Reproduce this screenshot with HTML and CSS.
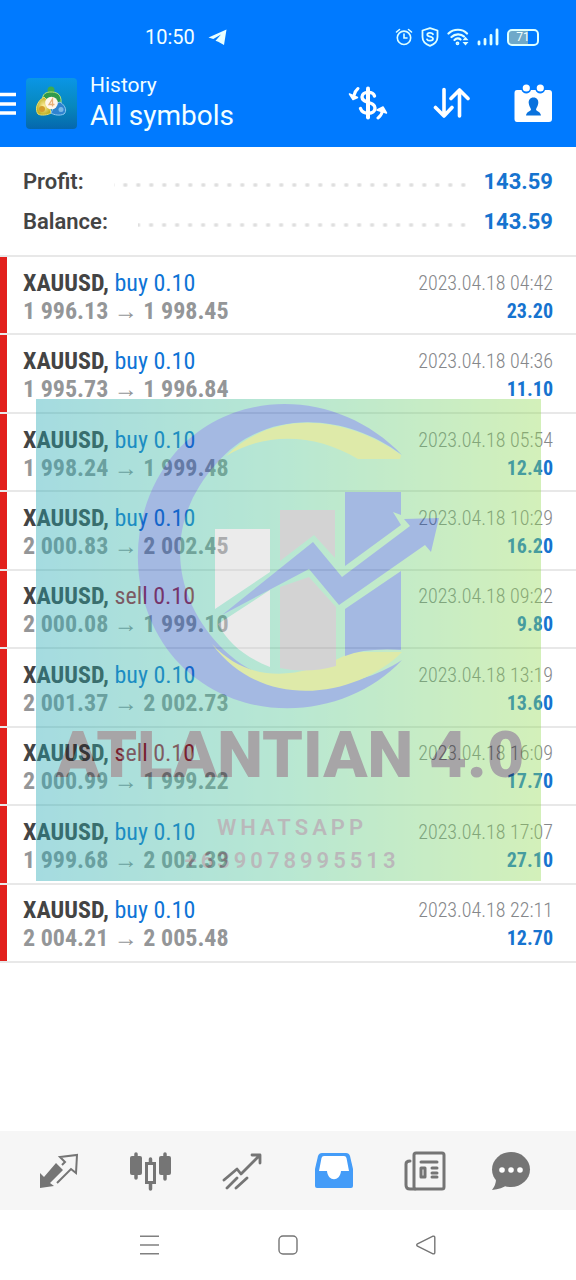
FILE: index.html
```html
<!DOCTYPE html>
<html lang="en">
<head>
<meta charset="utf-8">
<meta name="viewport" content="width=device-width, initial-scale=1">
<title>History</title>
<link rel="stylesheet" href="styles.css">
</head>
<body>
<div class="app">
  <header class="top">
    <div class="status">
      <div class="status-left">
        <time>10:50</time>
        <svg width="20" height="18" viewBox="0 0 20 18"><path fill="#e8ffff" d="M.5 9.500 18.500 1.500 16 17 10.200 13.800 7.500 12.800 13 6.500 5.300 11Z"/></svg>
      </div>
      <div class="status-right">
        <svg width="18" height="18" viewBox="0 0 18 18" fill="none" stroke="#dff" stroke-width="1.600" stroke-linecap="round"><circle cx="9" cy="9.800" r="6.700"/><path d="M9 6v4h3M1.500 4 4.500 1.500M16.500 4 13.500 1.500"/></svg>
        <svg width="18" height="20" viewBox="0 0 18 20" fill="none" stroke="#dff" stroke-width="1.800" stroke-linejoin="round" stroke-linecap="round"><path d="M9 1.200 16.500 3.500V10C16.500 14.500 13.500 17.200 9 18.900 4.500 17.200 1.500 14.500 1.500 10V3.500Z"/><path d="M12 7.300C11 5.500 6.300 5.400 6.300 7.800 6.300 10.300 12 9 12 11.800 12 14.300 7 14.200 6 12.300"/></svg>
        <svg width="22" height="18" viewBox="0 0 22 18" fill="none" stroke="#dff" stroke-width="2.200" stroke-linecap="round"><path d="M1.500 5.500C6.500.5 15.500.5 20 5.500M4.500 9C8 5.500 14 5.500 17 8.500M7.500 12C9.500 10 12 10 13.500 11.500"/><circle cx="10.500" cy="15.300" r=".8"/><path stroke="none" fill="#dff" d="M18.500 8.800 21.500 12.300H15.500ZM18.500 17.500 21.500 14H15.500Z"/></svg>
        <svg width="22" height="18" viewBox="0 0 22 18" stroke="#dff" stroke-width="2.800" stroke-linecap="round"><path d="M2 14v2M8 11.500V16M14 7.500V16M20 2V16"/></svg>
        <span class="battery">71</span>
      </div>
    </div>
    <div class="bar">
      <button class="menu" aria-label="Menu"><svg width="16" height="24" viewBox="0 0 16 24"><path stroke="#fff" stroke-width="3.600" d="M0 3.500H16M0 13H16M0 22H16"/></svg></button>
      <svg class="logo" viewBox="0 0 51 51">
        <defs>
          <linearGradient id="sky" x1="0" y1="0" x2="0" y2="1"><stop offset="0" stop-color="#0a96e6"/><stop offset=".55" stop-color="#0788bd"/><stop offset="1" stop-color="#0567ad"/></linearGradient>
          <radialGradient id="gold"><stop offset="0" stop-color="#fff0a0"/><stop offset="1" stop-color="#bfae22"/></radialGradient>
        </defs>
        <rect width="51" height="51" rx="4" fill="url(#sky)"/>
        <circle cx="25" cy="12" r="3.500" fill="#3eaa50"/>
        <path fill="#2f9a4c" stroke="#b6e37b" d="M17 24C15 15 21 14 25 14S36 15 35 25L29 28 20 27Z"/>
        <path fill="url(#gold)" stroke="#e8dd6a" d="M18 19C10 24 9 32 12 36 15 38 22 37 25 35L22 23Z"/>
        <path fill="#2e83d0" stroke="#8cc9ef" d="M29 26 34 24C40 28 41 33 38 36 34 38 28 37 25 35Z"/>
        <circle cx="16" cy="31" r="3" fill="#d49c2b"/><circle cx="35" cy="31.500" r="2.500" fill="#79b9e8"/>
        <circle cx="25.500" cy="25" r="6.300" fill="#fff6ea"/>
        <path fill="none" stroke="#e8b078" stroke-width="1.300" d="M26.500 28.500V21L23 26.500H28.500"/>
      </svg>
      <div class="titles"><h2>History</h2><h1>All symbols</h1></div>
      <div class="actions">
        <button aria-label="Currency"><svg width="40" height="34" viewBox="0 0 40 34" fill="none" stroke="#fff" stroke-width="3.400" stroke-linecap="round"><path d="M26.500 10C25 5 14 5 14 11 14 18 27 15 27 22 27 29 15 29 12.500 22.500"/><path stroke-width="4" d="M20 2.500V31.500"/><path stroke-width="3" d="M10 2.500C7.500 4.500 6.500 7 6 9.500"/><path fill="#fff" stroke-width="1.500" stroke-linejoin="round" d="M1.500 8 9.500 11.500 5 13.500Z"/><path stroke-width="3" d="M30 32C33 30 34 27 34.500 25"/><path fill="#fff" stroke-width="1.500" stroke-linejoin="round" d="M29 24 35 21 38.500 27Z"/></svg></button>
        <button aria-label="Sort"><svg width="38" height="32" viewBox="0 0 38 32" fill="none" stroke="#fff" stroke-width="3.600" stroke-linecap="round" stroke-linejoin="round"><path d="M12 2.500V29M3.500 20.500 12 29 20 20.500M27.500 29V3M19 11.500 27.500 3 36 11.500"/></svg></button>
        <button aria-label="Period"><svg width="38" height="38" viewBox="0 0 38 38"><path fill="#fff" d="M3 6H7.500A5 5 0 0 0 17 6H21.500A5 5 0 0 0 31 6H35Q38 6 38 9V35Q38 38 35 38H3Q.5 38 .5 35V9Q.5 6 3 6Z"/><circle cx="12.300" cy="4" r="3.600" fill="#fff"/><circle cx="26.300" cy="4" r="3.600" fill="#fff"/><path fill="#0a72dd" d="M19.500 13.500C23 13.500 24.500 16 24.300 19 24 22 22.500 23.500 22 25.500 22.500 27.500 26.500 27.500 27 31.500H12C12.500 27.500 16.500 27.500 17 25.500 16.500 23.500 15 22 14.700 19 14.500 16 16 13.500 19.500 13.500Z"/></svg></button>
      </div>
    </div>
  </header>

  <dl class="summary">
    <div><dt>Profit:</dt><dd>143.59</dd></div>
    <div><dt>Balance:</dt><dd>143.59</dd></div>
  </dl>

  <main class="history">
    <ul class="deals">
      <li><div><b>XAUUSD,</b> <span class="buy">buy 0.10</span></div><time>2023.04.18 04:42</time><div class="price">1 996.13 <i>→</i> 1 998.45</div><strong>23.20</strong></li>
      <li><div><b>XAUUSD,</b> <span class="buy">buy 0.10</span></div><time>2023.04.18 04:36</time><div class="price">1 995.73 <i>→</i> 1 996.84</div><strong>11.10</strong></li>
      <li><div><b>XAUUSD,</b> <span class="buy">buy 0.10</span></div><time>2023.04.18 05:54</time><div class="price">1 998.24 <i>→</i> 1 999.48</div><strong>12.40</strong></li>
      <li><div><b>XAUUSD,</b> <span class="buy">buy 0.10</span></div><time>2023.04.18 10:29</time><div class="price">2 000.83 <i>→</i> 2 002.45</div><strong>16.20</strong></li>
      <li><div><b>XAUUSD,</b> <span class="sell">sell 0.10</span></div><time>2023.04.18 09:22</time><div class="price">2 000.08 <i>→</i> 1 999.10</div><strong>9.80</strong></li>
      <li><div><b>XAUUSD,</b> <span class="buy">buy 0.10</span></div><time>2023.04.18 13:19</time><div class="price">2 001.37 <i>→</i> 2 002.73</div><strong>13.60</strong></li>
      <li><div><b>XAUUSD,</b> <span class="sell">sell 0.10</span></div><time>2023.04.18 16:09</time><div class="price">2 000.99 <i>→</i> 1 999.22</div><strong>17.70</strong></li>
      <li><div><b>XAUUSD,</b> <span class="buy">buy 0.10</span></div><time>2023.04.18 17:07</time><div class="price">1 999.68 <i>→</i> 2 002.39</div><strong>27.10</strong></li>
      <li><div><b>XAUUSD,</b> <span class="buy">buy 0.10</span></div><time>2023.04.18 22:11</time><div class="price">2 004.21 <i>→</i> 2 005.48</div><strong>12.70</strong></li>
    </ul>
    <div class="watermark">
      <svg viewBox="36 399 505 482">
        <path fill="#1e52b9" d="M402 455C340 390 235 385 175 453C124 514 127 603 175 659C237 728 345 721 402 660C350 694 270 699 219 645C170 592 165 520 217 463C264 408 345 412 402 455Z"/>
        <path fill="#afcd2a" d="M226 456C270 412 340 412 401 455L400 459H358C315 433 265 432 226 456ZM212 644C250 685 300 678 344 656Q352 652 362 652H402C360 695 265 715 212 644Z"/>
        <path fill="#cfcfcf" d="M215 529H270V572L215 609ZM218 624 270 590V667C245 657 228 643 218 624Z"/>
        <path fill="#949494" d="M280 510H335V558L314 535 280 561ZM280 587 309 577 336 607V666Q308 674 280 668Z"/>
        <path fill="#1e52b9" d="M345 492H401V515L393 512 401 525 345 566ZM345 609 401 571V650Q365 648 345 656Z"/>
        <path fill="#1e52b9" d="M222 615 313 542 342 577 410 526 404 519 439 518 431 552 425 545 339 605 309 569Z"/>
        <text class="wm-name" x="290" y="777">ATLANTIAN 4.0</text>
        <text class="wm-line" x="292" y="835">WHATSAPP</text>
        <text class="wm-line" x="292" y="868">+639078995513</text>
      </svg>
    </div>
  </main>

  <nav class="tabs">
    <button aria-label="Quotes"><svg width="42" height="40" viewBox="0 0 42 40"><path fill="#757575" d="M2 22 6 26 18 12 25 19 12 32 16 35 2 37Z"/><path fill="none" stroke="#757575" stroke-width="2" d="M24 14 27 11 22 6 39 4 38 22 33 18 19 32"/></svg></button>
    <button aria-label="Chart"><svg width="42" height="40" viewBox="0 0 42 40" fill="#757575"><rect x="1" y="5" width="12" height="19" rx="2"/><rect x="30" y="5" width="12" height="19" rx="2"/><path stroke="#757575" stroke-width="3.500" stroke-linecap="round" d="M7 3V27M36 3V28M21.500 8V12M21.500 33V38"/><rect x="17.500" y="12.500" width="8" height="19" fill="#f6f6f6" stroke="#757575" stroke-width="3"/></svg></button>
    <button aria-label="Trade"><svg width="42" height="40" viewBox="0 0 42 40" fill="none" stroke="#757575" stroke-width="2.800" stroke-linecap="round" stroke-linejoin="round"><path d="M3 29 16 18 20 23 38 5M31 4H39V12M6 37 16 27M15 37 26 27"/></svg></button>
    <button aria-label="History" aria-current="page"><svg width="42" height="40" viewBox="0 0 42 40"><path fill="#449cf8" d="M9 2H33Q36 2 37 5L40 18V35Q40 37 38 37H4Q2 37 2 35V18L5 5Q6 2 9 2Z"/><path fill="#fff" d="M11 5H31Q33 5 33.500 7L36 20H28C27 31 15 31 14 20H6L8.500 7Q9 5 11 5Z"/></svg></button>
    <button aria-label="News"><svg width="42" height="40" viewBox="0 0 42 40" fill="none" stroke="#757575" stroke-width="3" stroke-linejoin="round" stroke-linecap="round"><rect x="10" y="2" width="30" height="36" rx="2"/><path d="M6 10Q2 10 2 13V34Q2 38 6 38H11M17 11H33M28 17H33M28 22H33M28 26H33"/><rect x="17" y="17" width="4" height="9"/></svg></button>
    <button aria-label="Messages"><svg width="54" height="40" viewBox="0 0 54 40"><ellipse cx="21" cy="18.500" rx="19" ry="17.500" fill="#757575"/><path fill="#757575" d="M6 28Q6 34 2 39 12 38 17 34Z"/><g fill="#fff"><circle cx="12" cy="19" r="2.800"/><circle cx="21" cy="19" r="2.800"/><circle cx="30" cy="19" r="2.800"/></g></svg></button>
  </nav>
  <nav class="system">
    <button aria-label="Recents"><svg width="20" height="20" viewBox="0 0 20 20"><path stroke="#808080" stroke-width="1.500" d="M0 1.200H19M0 10H19M0 18.800H19"/></svg></button>
    <button aria-label="Home"><svg width="20" height="20" viewBox="0 0 20 20"><rect x="1" y="1" width="18" height="18" rx="4" fill="none" stroke="#757575" stroke-width="1.400"/></svg></button>
    <button aria-label="Back"><svg width="20" height="20" viewBox="0 0 20 20"><path fill="none" stroke="#757575" stroke-width="1.400" stroke-linejoin="round" d="M1.500 8.800 17 1.200Q18.800.8 18.800 2.500V17.500Q18.800 19.200 17 18.800L1.500 11.200Q0 10 1.500 8.800Z"/></svg></button>
  </nav>
</div>
</body>
</html>
```
FILE: styles.css
```css
* { box-sizing: border-box; }
body { margin: 0; background: #fff; font-family: Roboto, "Liberation Sans", sans-serif; color: #444; }
h1, h2, dl, dd, ul { margin: 0; padding: 0; font-weight: 400; }
svg { display: block; flex-shrink: 0; }
button { margin: 0; padding: 0; border: 0; background: none; display: flex; align-items: center; justify-content: center; cursor: pointer; }
.app { min-height: 100vh; display: flex; flex-direction: column; }

.top { background: #007aff; color: #f2ffff; padding-bottom: 13px; }
.status { display: flex; justify-content: space-between; align-items: center; padding: 25px 37px 0 145px; height: 49px; }
.status-left { display: flex; align-items: center; gap: 13px; font-size: 20px; line-height: 24px; }
.status-right { display: flex; align-items: center; gap: 8px; }
.battery { width: 32px; height: 17px; border: 2px solid #dff; border-radius: 5px; background: linear-gradient(90deg, #6fa9c9 68%, #007aff 68%); font-size: 12px; line-height: 13px; text-align: center; }

.bar { display: flex; align-items: center; padding: 23px 24px 0 0; }
.menu { margin-right: 10px; }
.logo { width: 51px; height: 51px; }
.titles { margin-left: 13px; flex: 1; }
.titles h2 { font-size: 21px; line-height: 26px; }
.titles h1 { font-size: 28px; line-height: 36px; }
.actions { display: flex; align-items: center; gap: 44px; }

.summary { padding: 15px 23px 13px; border-bottom: 2px solid #e8e8e8; display: grid; }
.summary div { display: flex; align-items: center; line-height: 40px; font-size: 22px; }
.summary dt { font-weight: 600; }
.summary dd { font-weight: 700; color: #1673cf; }
.summary div::after { content: ""; flex: 1; height: 4px; margin: 6px 14px 0 30px; background: radial-gradient(circle, #dedede 1px, transparent 3px) right center / 13px 4px repeat-x; }
.summary dd { order: 1; }

.history { position: relative; flex: 1; }
.deals { display: grid; grid-auto-rows: 1fr; list-style: none; min-height: 706px; font-family: "Roboto Condensed", Roboto, sans-serif; font-size: 24px; line-height: 28px; }
.deals li { display: grid; grid-template-columns: 1fr auto; align-content: center; align-items: center; padding: 3px 23px 0; border-bottom: 2px solid #e8e8e8; background: linear-gradient(90deg, #e2201c 7px, transparent 7px) padding-box; }
.deals b { font-weight: 700; }
.buy { color: #0e74d6; }
.sell { color: #b02035; }
.price { color: #949698; font-weight: 700; }
.price i { font-family: "Liberation Sans", sans-serif; font-style: normal; font-weight: 400; font-size: 24px; line-height: 20px; }
.deals time { font-size: 20px; font-weight: 350; color: #85878a; text-align: right; }
.deals strong { font-size: 20px; color: #1673cf; text-align: right; }

/* Brand overlay lies across the list */
.watermark { position: absolute; top: 142px; left: 36px; right: 35px; height: 482px; opacity: .4; background: linear-gradient(90deg, #20a8b4, #50c591 50%, #93db54); pointer-events: none; }
.watermark svg { width: 100%; height: 100%; }
.watermark text { text-anchor: middle; }
.watermark .wm-name { font: 900 65px Roboto, sans-serif; fill: #252025; }
.watermark .wm-line { font: 600 22px Roboto, sans-serif; letter-spacing: 4px; fill: #554f55; }

.tabs { display: grid; grid-template-columns: repeat(6, 1fr); padding: 0 13px; height: 79px; background: #f6f6f6; align-items: center; }
.system { display: flex; align-items: center; justify-content: center; gap: 118px; height: 70px; }
```
